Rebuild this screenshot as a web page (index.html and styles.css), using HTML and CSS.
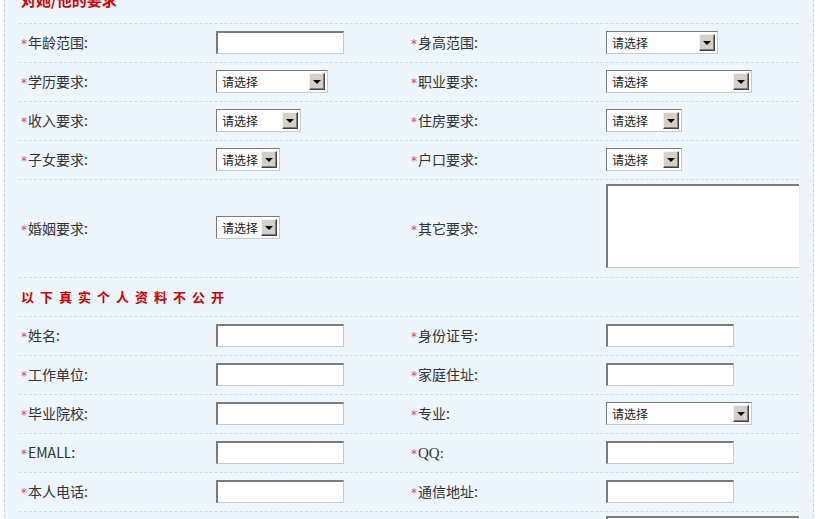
FILE: index.html
```html
<!DOCTYPE html>
<html lang="zh">
<head>
<meta charset="utf-8">
<link rel="stylesheet" href="styles.css">
</head>
<body>
<div class="panel">
  <div class="row head"><span class="title">对她/他的要求</span></div>

  <div class="row">
    <div class="lbl"><i>*</i>年龄范围:</div>
    <div class="fld"><span class="inp"></span></div>
    <div class="lbl"><i>*</i>身高范围:</div>
    <div class="fld"><span class="sel w112">请选择<b class="btn"></b></span></div>
  </div>
  <div class="row">
    <div class="lbl"><i>*</i>学历要求:</div>
    <div class="fld"><span class="sel w112">请选择<b class="btn"></b></span></div>
    <div class="lbl"><i>*</i>职业要求:</div>
    <div class="fld"><span class="sel w146">请选择<b class="btn"></b></span></div>
  </div>
  <div class="row">
    <div class="lbl"><i>*</i>收入要求:</div>
    <div class="fld"><span class="sel w85">请选择<b class="btn"></b></span></div>
    <div class="lbl"><i>*</i>住房要求:</div>
    <div class="fld"><span class="sel w76">请选择<b class="btn"></b></span></div>
  </div>
  <div class="row">
    <div class="lbl"><i>*</i>子女要求:</div>
    <div class="fld"><span class="sel w64">请选择<b class="btn"></b></span></div>
    <div class="lbl"><i>*</i>户口要求:</div>
    <div class="fld"><span class="sel w76">请选择<b class="btn"></b></span></div>
  </div>
  <div class="row tall">
    <div class="lbl"><i>*</i>婚姻要求:</div>
    <div class="fld"><span class="sel w64">请选择<b class="btn"></b></span></div>
    <div class="lbl"><i>*</i>其它要求:</div>
    <div class="fld clip"><span class="area"></span></div>
  </div>

  <div class="row head2"><span class="title2">以下真实个人资料不公开</span></div>

  <div class="row">
    <div class="lbl"><i>*</i>姓名:</div>
    <div class="fld"><span class="inp"></span></div>
    <div class="lbl"><i>*</i>身份证号:</div>
    <div class="fld"><span class="inp"></span></div>
  </div>
  <div class="row">
    <div class="lbl"><i>*</i>工作单位:</div>
    <div class="fld"><span class="inp"></span></div>
    <div class="lbl"><i>*</i>家庭住址:</div>
    <div class="fld"><span class="inp"></span></div>
  </div>
  <div class="row">
    <div class="lbl"><i>*</i>毕业院校:</div>
    <div class="fld"><span class="inp"></span></div>
    <div class="lbl"><i>*</i>专业:</div>
    <div class="fld"><span class="sel w146">请选择<b class="btn"></b></span></div>
  </div>
  <div class="row">
    <div class="lbl"><i>*</i>EMALL:</div>
    <div class="fld"><span class="inp"></span></div>
    <div class="lbl"><i>*</i><span class="serif">QQ:</span></div>
    <div class="fld"><span class="inp"></span></div>
  </div>
  <div class="row">
    <div class="lbl"><i>*</i>本人电话:</div>
    <div class="fld"><span class="inp"></span></div>
    <div class="lbl"><i>*</i>通信地址:</div>
    <div class="fld"><span class="inp"></span></div>
  </div>
  <div class="row last">
    <div class="lbl"></div>
    <div class="fld"></div>
    <div class="lbl"></div>
    <div class="fld clip top"><span class="area"></span></div>
  </div>
</div>
</body>
</html>
```
FILE: styles.css
```css
html, body {
  margin: 0;
  padding: 0;
  background: #ffffff;
  overflow: hidden;
}
body {
  font-family: "Noto Sans CJK SC", "DejaVu Sans", sans-serif;
  font-size: 14px;
  color: #333333;
}
.panel {
  margin: -16px 0 0 4px;
  width: 810px;
  box-sizing: border-box;
  border-left: 1px dashed #d3d8de;
  border-right: 1px dashed #d3d8de;
  background: #edf5fd;
  padding: 0 14px;
}
.row {
  display: grid;
  grid-template-columns: 197px 193px 197px 193px;
  height: 39px;
  box-sizing: border-box;
  border-bottom: 1px dashed #cfd8e0;
  align-items: center;
}
.row.tall { height: 98px; }
.row.head, .row.head2 { display: flex; padding-left: 2px; }
.row.head { height: 40px; }
.title {
  font-size: 15px;
  font-weight: bold;
  color: #d00000;
  position: relative;
  top: -4px;
}
.title2 {
  font-size: 13px;
  font-weight: bold;
  color: #cc0000;
  letter-spacing: 6px;
  position: relative;
  top: -1px;
}
.row.last { border-bottom: none; height: 20px; align-items: start; }
.lbl {
  padding-left: 2px;
  white-space: nowrap;
  position: relative;
  top: -1px;
}
.lbl i {
  font-style: normal;
  color: #e8434d;
  font-family: "DejaVu Sans", sans-serif;
  font-size: 12px;
  margin-right: 1px;
}
.serif { font-family: "Liberation Serif", serif; font-size: 15px; }
.fld { display: flex; align-items: center; }
.fld.clip { overflow: hidden; }
.tall .fld.clip { align-self: start; padding-top: 4px; }
.fld.top { padding-top: 4px; }
.inp {
  display: block;
  width: 128px;
  height: 23px;
  box-sizing: border-box;
  background: #ffffff;
  border-style: solid;
  border-width: 2px 1px 1px 2px;
  border-color: #7b7b7b #c8c8c8 #c8c8c8 #7b7b7b;
  position: relative;
  top: -1px;
}
.sel {
  display: flex;
  align-items: center;
  justify-content: space-between;
  height: 23px;
  box-sizing: border-box;
  background: #ffffff;
  border-style: solid;
  border-width: 1px;
  border-color: #7b7b7b #c8c8c8 #c8c8c8 #7b7b7b;
  padding: 0 2px 0 5px;
  font-size: 12px;
  color: #222222;
  position: relative;
  top: -1px;
}
.w64 { width: 64px; }
.w76 { width: 76px; }
.w85 { width: 85px; }
.w112 { width: 112px; }
.w146 { width: 146px; }
.btn {
  display: flex;
  align-items: center;
  justify-content: center;
  width: 16px;
  height: 17px;
  box-sizing: border-box;
  background: #d4d0c8;
  border-style: solid;
  border-width: 1px;
  border-color: #f4f3ef #404040 #404040 #f4f3ef;
  box-shadow: inset -1px -1px 0 #808080;
}
.btn::after {
  content: "";
  display: block;
  width: 0;
  height: 0;
  border-left: 4px solid transparent;
  border-right: 4px solid transparent;
  border-top: 4px solid #000000;
  margin: 1px 1px 0 0;
}
.area {
  display: block;
  width: 200px;
  height: 84px;
  flex-shrink: 0;
  box-sizing: border-box;
  background: #ffffff;
  border-style: solid;
  border-width: 2px 1px 1px 2px;
  border-color: #7b7b7b #c8c8c8 #c8c8c8 #7b7b7b;
}
```
